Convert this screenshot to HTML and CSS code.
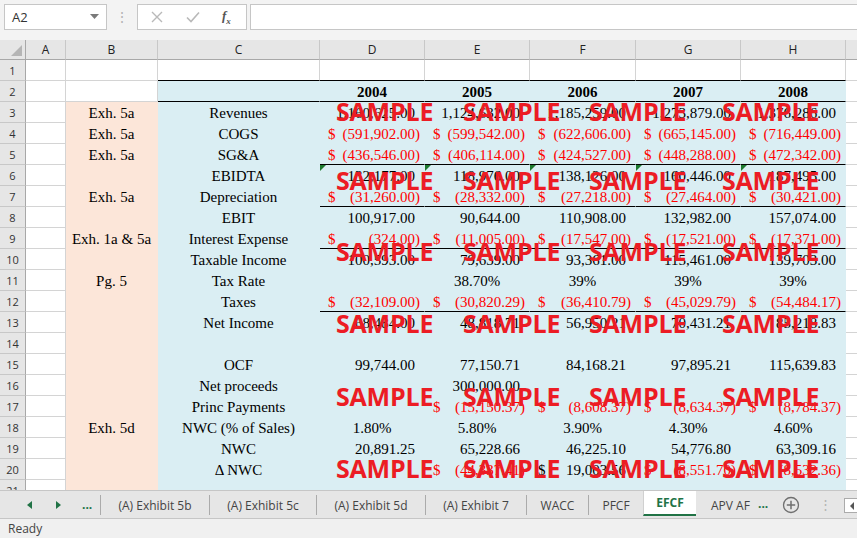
FILE: index.html
```html
<!DOCTYPE html>
<html lang="en">
<head>
  <meta charset="UTF-8">
  <title>EFCF</title>
  <link rel="stylesheet" href="styles.css">
</head>
<body>
  <!-- Barra de fórmulas -->
  <div class="formula-bar">
    <div class="name-box">
      <span>A2</span>
      <svg width="9" height="6" viewBox="0 0 9 6"><path d="M0 0 H9 L4.5 5 Z" fill="#7a7a7a"/></svg>
    </div>
    <div class="fb-dots">⋮</div>
    <div class="fx-box">
      <svg class="fx-cancel" width="12" height="12" viewBox="0 0 12 12"><path d="M1 1 L11 11 M11 1 L1 11" stroke="#b9b9b9" stroke-width="1.4"/></svg>
      <svg class="fx-enter" width="14" height="12" viewBox="0 0 14 12"><path d="M1 6.5 L5 10.5 L13 1.5" stroke="#b9b9b9" stroke-width="1.6" fill="none"/></svg>
      <span class="fx">f<sub>x</sub></span>
    </div>
    <div class="fb-input"></div>
  </div>

  <div class="sheet">
    <table class="grid">
      <colgroup>
        <col style="width:26px"><col style="width:40px"><col style="width:92px"><col style="width:162px">
        <col style="width:105px"><col style="width:105px"><col style="width:106px"><col style="width:105px">
        <col style="width:105px"><col style="width:80px">
      </colgroup>
      <thead>
        <tr>
          <th class="corner"><span></span></th>
          <th>A</th><th>B</th><th>C</th><th>D</th><th>E</th><th>F</th><th>G</th><th>H</th><th></th>
        </tr>
      </thead>
      <tbody>
        <tr>
          <th class="rh">1</th>
          <td class="w"></td><td class="w"></td>
          <td class="w ul"></td><td class="w ul"></td><td class="w ul"></td><td class="w ul"></td><td class="w ul"></td><td class="w ul"></td>
          <td class="w"></td>
        </tr>
        <tr>
          <th class="rh">2</th>
          <td class="w"></td><td class="w"></td>
          <td class="bl ul"></td>
          <td class="bl ul yr">2004</td><td class="bl ul yr">2005</td><td class="bl ul yr">2006</td><td class="bl ul yr">2007</td><td class="bl ul yr">2008</td>
          <td class="w"></td>
        </tr>
        <tr>
          <th class="rh">3</th>
          <td class="w"></td><td class="pe lbl">Exh. 5a</td><td class="bl lbl">Revenues</td>
          <td class="bl num">1,160,625.00</td><td class="bl num">1,124,632.00</td><td class="bl num">1,185,259.00</td><td class="bl num">1,273,879.00</td><td class="bl num">1,376,286.00</td>
          <td class="w"></td>
        </tr>
        <tr>
          <th class="rh">4</th>
          <td class="w"></td><td class="pe lbl">Exh. 5a</td><td class="bl lbl">COGS</td>
          <td class="bl neg"><div class="acct"><span>$</span><span>(591,902.00)</span></div></td>
          <td class="bl neg"><div class="acct"><span>$</span><span>(599,542.00)</span></div></td>
          <td class="bl neg"><div class="acct"><span>$</span><span>(622,606.00)</span></div></td>
          <td class="bl neg"><div class="acct"><span>$</span><span>(665,145.00)</span></div></td>
          <td class="bl neg"><div class="acct"><span>$</span><span>(716,449.00)</span></div></td>
          <td class="w"></td>
        </tr>
        <tr>
          <th class="rh">5</th>
          <td class="w"></td><td class="pe lbl">Exh. 5a</td><td class="bl lbl">SG&amp;A</td>
          <td class="bl ul neg"><div class="acct"><span>$</span><span>(436,546.00)</span></div></td>
          <td class="bl ul neg"><div class="acct"><span>$</span><span>(406,114.00)</span></div></td>
          <td class="bl ul neg"><div class="acct"><span>$</span><span>(424,527.00)</span></div></td>
          <td class="bl ul neg"><div class="acct"><span>$</span><span>(448,288.00)</span></div></td>
          <td class="bl ul neg"><div class="acct"><span>$</span><span>(472,342.00)</span></div></td>
          <td class="w"></td>
        </tr>
        <tr>
          <th class="rh">6</th>
          <td class="w"></td><td class="pe"></td><td class="bl lbl">EBIDTA</td>
          <td class="bl num err">132,177.00</td><td class="bl num err">118,976.00</td><td class="bl num err">138,126.00</td><td class="bl num err">160,446.00</td><td class="bl num err">187,495.00</td>
          <td class="w"></td>
        </tr>
        <tr>
          <th class="rh">7</th>
          <td class="w"></td><td class="pe lbl">Exh. 5a</td><td class="bl lbl">Depreciation</td>
          <td class="bl ul neg"><div class="acct"><span>$</span><span>(31,260.00)</span></div></td>
          <td class="bl ul neg"><div class="acct"><span>$</span><span>(28,332.00)</span></div></td>
          <td class="bl ul neg"><div class="acct"><span>$</span><span>(27,218.00)</span></div></td>
          <td class="bl ul neg"><div class="acct"><span>$</span><span>(27,464.00)</span></div></td>
          <td class="bl ul neg"><div class="acct"><span>$</span><span>(30,421.00)</span></div></td>
          <td class="w"></td>
        </tr>
        <tr>
          <th class="rh">8</th>
          <td class="w"></td><td class="pe"></td><td class="bl lbl">EBIT</td>
          <td class="bl num">100,917.00</td><td class="bl num">90,644.00</td><td class="bl num">110,908.00</td><td class="bl num">132,982.00</td><td class="bl num">157,074.00</td>
          <td class="w"></td>
        </tr>
        <tr>
          <th class="rh">9</th>
          <td class="w"></td><td class="pe lbl">Exh. 1a &amp; 5a</td><td class="bl lbl">Interest Expense</td>
          <td class="bl ul neg"><div class="acct"><span>$</span><span>(324.00)</span></div></td>
          <td class="bl ul neg"><div class="acct"><span>$</span><span>(11,005.00)</span></div></td>
          <td class="bl ul neg"><div class="acct"><span>$</span><span>(17,547.00)</span></div></td>
          <td class="bl ul neg"><div class="acct"><span>$</span><span>(17,521.00)</span></div></td>
          <td class="bl ul neg"><div class="acct"><span>$</span><span>(17,371.00)</span></div></td>
          <td class="w"></td>
        </tr>
        <tr>
          <th class="rh">10</th>
          <td class="w"></td><td class="pe"></td><td class="bl lbl">Taxable Income</td>
          <td class="bl num">100,593.00</td><td class="bl num">79,639.00</td><td class="bl num">93,361.00</td><td class="bl num">115,461.00</td><td class="bl num">139,703.00</td>
          <td class="w"></td>
        </tr>
        <tr>
          <th class="rh">11</th>
          <td class="w"></td><td class="pe lbl">Pg. 5</td><td class="bl lbl">Tax Rate</td>
          <td class="bl"></td><td class="bl pct">38.70%</td><td class="bl pct">39%</td><td class="bl pct">39%</td><td class="bl pct">39%</td>
          <td class="w"></td>
        </tr>
        <tr>
          <th class="rh">12</th>
          <td class="w"></td><td class="pe"></td><td class="bl lbl">Taxes</td>
          <td class="bl ul neg"><div class="acct"><span>$</span><span>(32,109.00)</span></div></td>
          <td class="bl ul neg"><div class="acct"><span>$</span><span>(30,820.29)</span></div></td>
          <td class="bl ul neg"><div class="acct"><span>$</span><span>(36,410.79)</span></div></td>
          <td class="bl ul neg"><div class="acct"><span>$</span><span>(45,029.79)</span></div></td>
          <td class="bl ul neg"><div class="acct"><span>$</span><span>(54,484.17)</span></div></td>
          <td class="w"></td>
        </tr>
        <tr>
          <th class="rh">13</th>
          <td class="w"></td><td class="pe"></td><td class="bl lbl">Net Income</td>
          <td class="bl num">68,484.00</td><td class="bl num">48,818.71</td><td class="bl num">56,950.21</td><td class="bl num">70,431.21</td><td class="bl num">85,218.83</td>
          <td class="w"></td>
        </tr>
        <tr>
          <th class="rh">14</th>
          <td class="w"></td><td class="pe"></td><td class="bl"></td>
          <td class="bl"></td><td class="bl"></td><td class="bl"></td><td class="bl"></td><td class="bl"></td>
          <td class="w"></td>
        </tr>
        <tr>
          <th class="rh">15</th>
          <td class="w"></td><td class="pe"></td><td class="bl lbl">OCF</td>
          <td class="bl num">99,744.00</td><td class="bl num">77,150.71</td><td class="bl num">84,168.21</td><td class="bl num">97,895.21</td><td class="bl num">115,639.83</td>
          <td class="w"></td>
        </tr>
        <tr>
          <th class="rh">16</th>
          <td class="w"></td><td class="pe"></td><td class="bl lbl">Net proceeds</td>
          <td class="bl"></td><td class="bl num">300,000.00</td><td class="bl"></td><td class="bl"></td><td class="bl"></td>
          <td class="w"></td>
        </tr>
        <tr>
          <th class="rh">17</th>
          <td class="w"></td><td class="pe"></td><td class="bl lbl">Princ Payments</td>
          <td class="bl"></td>
          <td class="bl neg"><div class="acct"><span>$</span><span>(15,150.37)</span></div></td>
          <td class="bl neg"><div class="acct"><span>$</span><span>(8,608.37)</span></div></td>
          <td class="bl neg"><div class="acct"><span>$</span><span>(8,634.37)</span></div></td>
          <td class="bl neg"><div class="acct"><span>$</span><span>(8,784.37)</span></div></td>
          <td class="w"></td>
        </tr>
        <tr>
          <th class="rh">18</th>
          <td class="w"></td><td class="pe lbl">Exh. 5d</td><td class="bl lbl">NWC (% of Sales)</td>
          <td class="bl pct">1.80%</td><td class="bl pct">5.80%</td><td class="bl pct">3.90%</td><td class="bl pct">4.30%</td><td class="bl pct">4.60%</td>
          <td class="w"></td>
        </tr>
        <tr>
          <th class="rh">19</th>
          <td class="w"></td><td class="pe"></td><td class="bl lbl">NWC</td>
          <td class="bl num">20,891.25</td><td class="bl num">65,228.66</td><td class="bl num">46,225.10</td><td class="bl num">54,776.80</td><td class="bl num">63,309.16</td>
          <td class="w"></td>
        </tr>
        <tr>
          <th class="rh">20</th>
          <td class="w"></td><td class="pe"></td><td class="bl lbl">Δ NWC</td>
          <td class="bl"></td>
          <td class="bl neg"><div class="acct"><span>$</span><span>(44,337.41)</span></div></td>
          <td class="bl"><div class="acct pos"><span>$</span><span>19,003.56</span></div></td>
          <td class="bl neg"><div class="acct"><span>$</span><span>(8,551.70)</span></div></td>
          <td class="bl neg"><div class="acct"><span>$</span><span>(8,532.36)</span></div></td>
          <td class="w"></td>
        </tr>
        <tr>
          <th class="rh">21</th>
          <td class="w"></td><td class="pe"></td><td class="bl"></td>
          <td class="bl"></td><td class="bl"></td><td class="bl"></td><td class="bl"></td><td class="bl"></td>
          <td class="w"></td>
        </tr>
      </tbody>
    </table>
  </div>

  <!-- Abas das planilhas -->
  <div class="tabbar">
    <div class="tab-nav">
      <span class="nav-prev"></span>
      <span class="nav-next"></span>
      <span class="nav-more">...</span>
    </div>
    <div class="tab" style="width:109px">(A) Exhibit 5b</div>
    <div class="tab" style="width:107px">(A) Exhibit 5c</div>
    <div class="tab" style="width:109px">(A) Exhibit 5d</div>
    <div class="tab" style="width:101px">(A) Exhibit 7</div>
    <div class="tab" style="width:62px">WACC</div>
    <div class="tab" style="width:55px">PFCF</div>
    <div class="tab active" style="width:53px">EFCF</div>
    <div class="tab clipped">APV AF</div>
    <span class="tab-more">...</span>
    <svg class="tab-add" width="18" height="18" viewBox="0 0 18 18">
      <circle cx="9" cy="9" r="7.5" fill="none" stroke="#6f6f6f" stroke-width="1.3"/>
      <path d="M9 4.8 V13.2 M4.8 9 H13.2" stroke="#6f6f6f" stroke-width="1.5"/>
    </svg>
    <span class="tab-dots">⋮</span>
    <div class="hscroll"><span></span></div>
  </div>

  <div class="status-bar">Ready</div>

  <!-- Marca d'água -->
  <div class="watermarks">
    <span style="left:336px;top:99px">SAMPLE</span><span style="left:463px;top:99px">SAMPLE</span><span style="left:589px;top:99px">SAMPLE</span><span style="left:722px;top:99px">SAMPLE</span>
    <span style="left:336px;top:168px">SAMPLE</span><span style="left:463px;top:168px">SAMPLE</span><span style="left:589px;top:168px">SAMPLE</span><span style="left:722px;top:168px">SAMPLE</span>
    <span style="left:336px;top:239px">SAMPLE</span><span style="left:463px;top:239px">SAMPLE</span><span style="left:589px;top:239px">SAMPLE</span><span style="left:722px;top:239px">SAMPLE</span>
    <span style="left:336px;top:311px">SAMPLE</span><span style="left:463px;top:311px">SAMPLE</span><span style="left:589px;top:311px">SAMPLE</span><span style="left:722px;top:311px">SAMPLE</span>
    <span style="left:336px;top:384px">SAMPLE</span><span style="left:463px;top:384px">SAMPLE</span><span style="left:589px;top:384px">SAMPLE</span><span style="left:722px;top:384px">SAMPLE</span>
    <span style="left:336px;top:456px">SAMPLE</span><span style="left:463px;top:456px">SAMPLE</span><span style="left:589px;top:456px">SAMPLE</span><span style="left:722px;top:456px">SAMPLE</span>
  </div>
</body>
</html>
```

FILE: styles.css
```css
* {
  margin: 0;
  padding: 0;
  box-sizing: border-box;
}

body {
  width: 857px;
  height: 538px;
  overflow: hidden;
  position: relative;
  background-color: #fff;
  font-family: "Open Sans", sans-serif;
  color: #222;
}

/* Barra de fórmulas */
.formula-bar {
  height: 40px;
  background-color: #f3f3f3;
  display: flex;
  align-items: flex-start;
  padding: 4px 0 0 4px;
}

.name-box {
  width: 103px;
  height: 26px;
  background-color: #fff;
  border: 1px solid #c6c6c6;
  display: flex;
  align-items: center;
  justify-content: space-between;
  padding: 0 7px 0 7px;
  font-size: 13px;
  color: #333;
}

.fb-dots {
  width: 30px;
  line-height: 26px;
  text-align: center;
  color: #b3b3b3;
  font-size: 14px;
}

.fx-box {
  width: 110px;
  height: 26px;
  background-color: #fff;
  border: 1px solid #c6c6c6;
  display: flex;
  align-items: center;
}

.fx-cancel {
  margin-left: 13px;
}

.fx-enter {
  margin-left: 23px;
}

.fx {
  margin-left: 22px;
  font-family: "Liberation Serif", serif;
  font-style: italic;
  font-weight: bold;
  font-size: 13px;
  color: #555;
}

.fx sub {
  font-size: 9px;
}

.fb-input {
  flex: 1;
  height: 26px;
  margin-left: 3px;
  background-color: #fff;
  border: 1px solid #c6c6c6;
  border-right: none;
}

/* Planilha */
.sheet {
  height: 450px;
  overflow: hidden;
}

.grid {
  width: 926px;
  table-layout: fixed;
  border-collapse: separate;
  border-spacing: 0;
  font-family: "Liberation Serif", serif;
  font-size: 15px;
  color: #000;
}

.grid thead th {
  height: 20px;
  background-color: #e6e6e6;
  border-right: 1px solid #c8c8c8;
  border-bottom: 1px solid #a8a8a8;
  font-family: "Open Sans", sans-serif;
  font-size: 12px;
  font-weight: normal;
  color: #222;
}

.grid thead th.corner {
  border-right-color: #a8a8a8;
  position: relative;
}

.corner span {
  position: absolute;
  right: 3px;
  bottom: 3px;
  width: 0;
  height: 0;
  border-left: 11px solid transparent;
  border-bottom: 11px solid #b5b5b5;
}

.grid th.rh {
  height: 21px;
  background-color: #e6e6e6;
  border-right: 1px solid #a8a8a8;
  border-bottom: 1px solid #c8c8c8;
  font-family: "Open Sans", sans-serif;
  font-size: 11px;
  font-weight: normal;
  color: #333;
  text-align: center;
}

.grid td {
  height: 21px;
  line-height: 18px;
  vertical-align: bottom;
  padding: 0;
  white-space: nowrap;
  border-right: 1px solid #d4d4d4;
  border-bottom: 1px solid #d4d4d4;
  position: relative;
}

.grid td.pe {
  background-color: #fce6d9;
  border-color: #fce6d9;
}

.grid td.bl {
  background-color: #daeef3;
  border-color: #daeef3;
}

.grid td.ul {
  border-bottom-color: #000;
}

.lbl, .pct, .yr {
  text-align: center;
}

.yr {
  font-weight: bold;
}

.num {
  text-align: right;
  padding-right: 9px !important;
}

.neg {
  color: #ff0000;
}

.acct {
  display: flex;
  justify-content: space-between;
  padding: 0 4px 0 8px;
}

.acct.pos {
  padding-right: 9px;
}

.err::before {
  content: "";
  position: absolute;
  left: 0;
  top: 0;
  border-top: 6px solid #1d7a2f;
  border-right: 6px solid transparent;
}

/* Abas */
.tabbar {
  height: 29px;
  background-color: #e6e6e6;
  border-top: 1px solid #c6c6c6;
  border-bottom: 1px solid #c6c6c6;
  display: flex;
  align-items: flex-start;
  font-size: 12px;
  color: #444;
}

.tabbar > * {
  flex-shrink: 0;
}

.tab-nav {
  width: 100px;
  height: 27px;
  display: flex;
  align-items: center;
}

.nav-prev {
  margin-left: 27px;
  border-top: 4px solid transparent;
  border-bottom: 4px solid transparent;
  border-right: 5px solid #217346;
}

.nav-next {
  margin-left: 24px;
  border-top: 4px solid transparent;
  border-bottom: 4px solid transparent;
  border-left: 5px solid #217346;
}

.nav-more {
  margin-left: 21px;
  color: #217346;
  font-weight: bold;
  font-size: 12px;
  line-height: 12px;
}

.tab {
  height: 20px;
  margin-top: 4px;
  border-left: 1px solid #ababab;
  display: flex;
  align-items: center;
  justify-content: center;
  white-space: nowrap;
}

.tab.active {
  height: 25px;
  margin-top: 0;
  background-color: #fff;
  border-left: 1px solid #d0d0d0;
  border-bottom: 2px solid #217346;
  color: #217346;
  font-weight: bold;
}

.tab.clipped {
  width: 56px;
  border-left: none;
  justify-content: flex-start;
  padding-left: 15px;
  overflow: hidden;
}

.tab-more {
  margin: 6px 0 0 6px;
  color: #217346;
  font-weight: bold;
  line-height: 14px;
}

.tab-add {
  margin: 5px 0 0 14px;
}

.tab-dots {
  margin: 4px 0 0 19px;
  color: #b3b3b3;
  font-size: 13px;
  line-height: 18px;
}

.hscroll {
  margin: 7px 0 0 12px;
  width: 22px;
  height: 15px;
  background-color: #fff;
  border: 1px solid #ababab;
  display: flex;
  align-items: center;
}

.hscroll span {
  margin-left: 5px;
  border-top: 4px solid transparent;
  border-bottom: 4px solid transparent;
  border-right: 4px solid #555;
}

/* Barra de status */
.status-bar {
  height: 19px;
  background-color: #f0f0f0;
  padding-left: 8px;
  font-size: 12px;
  line-height: 19px;
  color: #444;
}

/* Marca d'água */
.watermarks span {
  position: absolute;
  font-family: "Open Sans", sans-serif;
  font-weight: bold;
  font-size: 25px;
  line-height: 25px;
  color: #ec1c24;
  letter-spacing: -0.2px;
}
```
